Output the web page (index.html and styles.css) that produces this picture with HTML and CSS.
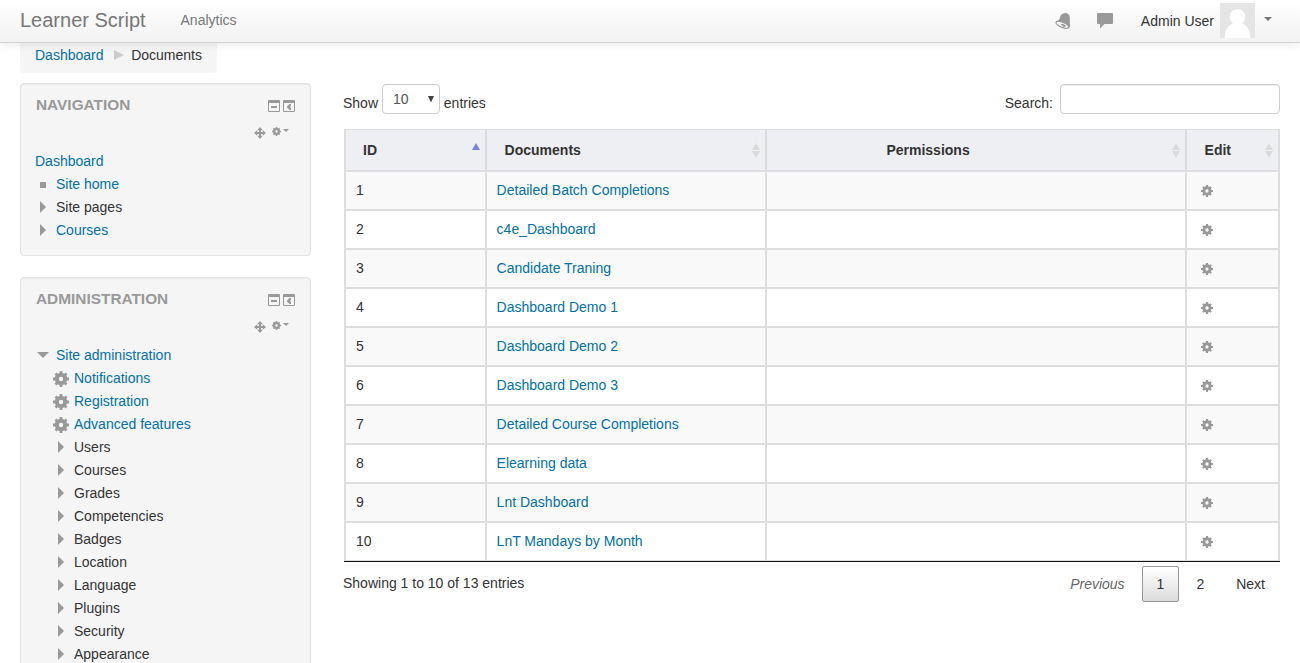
FILE: index.html
```html
<!DOCTYPE html>
<html lang="en">
<head>
<meta charset="utf-8">
<title>Learner Script: Documents</title>
<link rel="stylesheet" href="styles.css">
</head>
<body>
<svg class="defs" width="0" height="0" aria-hidden="true">
  <symbol id="gear" viewBox="0 0 16 16">
    <circle cx="8" cy="8" r="4.200" fill="none" stroke="#999" stroke-width="4"/>
    <path fill="none" stroke="#999" stroke-width="2.800" d="M8 0v4M8 12v4M0 8h4M12 8h4M2.500 2.500l2.500 2.500M11 11l2.500 2.500M2.500 13.500l2.500-2.500M11 5l2.500-2.500"/>
  </symbol>
  <symbol id="hide" viewBox="0 0 12 12">
    <path fill-rule="evenodd" d="M1 0h10a1 1 0 0 1 1 1v10a1 1 0 0 1-1 1H1a1 1 0 0 1-1-1V1a1 1 0 0 1 1-1zM1 3v8h10V3zM3 6h6v2H3z"/>
  </symbol>
  <symbol id="dock" viewBox="0 0 12 12">
    <path fill-rule="evenodd" d="M1 0h10a1 1 0 0 1 1 1v10a1 1 0 0 1-1 1H1a1 1 0 0 1-1-1V1a1 1 0 0 1 1-1zM1 3v8h10V3zM6.500 4H8v1.700L7 7l1 1.300V10H6.500L4 7.500v-1z"/>
  </symbol>
  <symbol id="move" viewBox="0 0 12 12">
    <path d="M6 0l2.800 3.200H7V5h1.800V3.200L12 6 8.800 8.800V7H7v1.800h1.800L6 12 3.200 8.800H5V7H3.200v1.800L0 6l3.200-2.800V5H5V3.200H3.200z"/>
  </symbol>
</svg>

<header class="navbar">
  <a class="brand">Learner Script</a>
  <a class="nav-link">Analytics</a>
  <div class="nav-right">
    <svg class="bell" width="16" height="18" viewBox="0 0 16 18"><path d="M8.500 1.600L11 .8l1.200.7c1.800.8 2.700 2.200 2.600 4.500v5.500l.5 1.500-1.200 3.500L.5 10l2.200-1.300c1.600-.8 2-2 2.500-3.700.5-1.900 1.300-3 3.300-3.400z"/><ellipse cx="7.300" cy="12.800" rx="6.700" ry="2.500" transform="rotate(22 7.300 12.800)" fill="#f7f7f7" stroke="#999" stroke-width="1.100"/><path d="M5.500 12l2-.3 3 1.500.2 1.500-2 .3z"/></svg>
    <svg class="chat" width="16" height="16" viewBox="0 0 16 16"><path d="M1 0h14a1 1 0 0 1 1 1v9a1 1 0 0 1-1 1H7.500L3 15.500V11H1a1 1 0 0 1-1-1V1a1 1 0 0 1 1-1z"/></svg>
    <span class="user">Admin User</span>
    <svg class="avatar" width="35" height="35" viewBox="0 0 35 35"><path fill="#e5e5e5" d="M0 0h35v35H0z"/><path fill="#fff" d="M17.500 6.200a7.700 7.700 0 0 1 4.500 14c5.500 2 8.300 7.500 8.300 14.800H4.700c0-7.300 2.800-12.800 8.300-14.800a7.700 7.700 0 0 1 4.500-14z"/></svg>
    <span class="caret"></span>
  </div>
</header>

<nav class="breadcrumb">
  <a class="link">Dashboard</a><span class="crumb-sep"></span><span>Documents</span>
</nav>

<div class="page">
  <aside class="sidebar">
    <section class="block">
      <div class="block-head"><h2>Navigation</h2><div class="tools"><svg><use href="#hide"/></svg><svg><use href="#dock"/></svg></div></div>
      <div class="controls"><svg class="move"><use href="#move"/></svg><svg class="cog"><use href="#gear"/></svg><span class="caret small"></span></div>
      <ul class="tree">
        <li class="root"><a class="link">Dashboard</a></li>
        <li><i class="icon"><b class="square"></b></i><a class="link">Site home</a></li>
        <li><i class="icon"><b class="right"></b></i>Site pages</li>
        <li><i class="icon"><b class="right"></b></i><a class="link">Courses</a></li>
      </ul>
    </section>
    <section class="block">
      <div class="block-head"><h2>Administration</h2><div class="tools"><svg><use href="#hide"/></svg><svg><use href="#dock"/></svg></div></div>
      <div class="controls"><svg class="move"><use href="#move"/></svg><svg class="cog"><use href="#gear"/></svg><span class="caret small"></span></div>
      <ul class="tree">
        <li><i class="icon"><b class="down"></b></i><a class="link">Site administration</a></li>
        <li class="sub"><i class="icon"><svg class="gear"><use href="#gear"/></svg></i><a class="link">Notifications</a></li>
        <li class="sub"><i class="icon"><svg class="gear"><use href="#gear"/></svg></i><a class="link">Registration</a></li>
        <li class="sub"><i class="icon"><svg class="gear"><use href="#gear"/></svg></i><a class="link">Advanced features</a></li>
        <li class="sub"><i class="icon"><b class="right"></b></i>Users</li>
        <li class="sub"><i class="icon"><b class="right"></b></i>Courses</li>
        <li class="sub"><i class="icon"><b class="right"></b></i>Grades</li>
        <li class="sub"><i class="icon"><b class="right"></b></i>Competencies</li>
        <li class="sub"><i class="icon"><b class="right"></b></i>Badges</li>
        <li class="sub"><i class="icon"><b class="right"></b></i>Location</li>
        <li class="sub"><i class="icon"><b class="right"></b></i>Language</li>
        <li class="sub"><i class="icon"><b class="right"></b></i>Plugins</li>
        <li class="sub"><i class="icon"><b class="right"></b></i>Security</li>
        <li class="sub"><i class="icon"><b class="right"></b></i>Appearance</li>
      </ul>
    </section>
  </aside>

  <main class="content">
    <div class="toolbar">
      <span class="label">Show</span>
      <div class="select">10<svg width="6" height="7" viewBox="0 0 6 7"><path d="M0 0h6L3 6.500z"/></svg></div>
      <span class="label">entries</span>
      <label class="label search-label" for="search">Search:</label>
      <input id="search" class="search" type="text">
    </div>
    <table class="documents">
      <colgroup><col class="c-id"><col class="c-doc"><col class="c-perm"><col class="c-edit"></colgroup>
      <thead>
        <tr>
          <th><div class="th">ID<span class="sort asc"></span></div></th>
          <th><div class="th">Documents<span class="sort"></span></div></th>
          <th><div class="th"><span class="mid">Permissions</span><span class="sort"></span></div></th>
          <th><div class="th">Edit<span class="sort"></span></div></th>
        </tr>
      </thead>
      <tbody>
        <tr><td>1</td><td><a class="link">Detailed Batch Completions</a></td><td></td><td><svg class="edit"><use href="#gear"/></svg></td></tr>
        <tr><td>2</td><td><a class="link">c4e_Dashboard</a></td><td></td><td><svg class="edit"><use href="#gear"/></svg></td></tr>
        <tr><td>3</td><td><a class="link">Candidate Traning</a></td><td></td><td><svg class="edit"><use href="#gear"/></svg></td></tr>
        <tr><td>4</td><td><a class="link">Dashboard Demo 1</a></td><td></td><td><svg class="edit"><use href="#gear"/></svg></td></tr>
        <tr><td>5</td><td><a class="link">Dashboard Demo 2</a></td><td></td><td><svg class="edit"><use href="#gear"/></svg></td></tr>
        <tr><td>6</td><td><a class="link">Dashboard Demo 3</a></td><td></td><td><svg class="edit"><use href="#gear"/></svg></td></tr>
        <tr><td>7</td><td><a class="link">Detailed Course Completions</a></td><td></td><td><svg class="edit"><use href="#gear"/></svg></td></tr>
        <tr><td>8</td><td><a class="link">Elearning data</a></td><td></td><td><svg class="edit"><use href="#gear"/></svg></td></tr>
        <tr><td>9</td><td><a class="link">Lnt Dashboard</a></td><td></td><td><svg class="edit"><use href="#gear"/></svg></td></tr>
        <tr><td>10</td><td><a class="link">LnT Mandays by Month</a></td><td></td><td><svg class="edit"><use href="#gear"/></svg></td></tr>
      </tbody>
    </table>
    <div class="footer">
      <span class="info">Showing 1 to 10 of 13 entries</span>
      <div class="pager">
        <a class="page-btn disabled">Previous</a><a class="page-btn current">1</a><a class="page-btn">2</a><a class="page-btn">Next</a>
      </div>
    </div>
  </main>
</div>
</body>
</html>
```
FILE: styles.css
```css
* { box-sizing: border-box; }
body {
  margin: 0;
  background: #fff;
  color: #333;
  font: 14px/20px "Liberation Sans", Arial, sans-serif;
}
svg { display: block; fill: #999; flex: none; }
.defs { position: absolute; }
.link { color: #0070a8; }

.navbar {
  position: relative;
  z-index: 2;
  display: flex;
  align-items: center;
  height: 43px;
  padding: 0 28px 2px 20px;
  border-bottom: 1px solid #d4d4d4;
  background: linear-gradient(#fff, #f2f2f2);
  box-shadow: 0 1px 10px rgba(0, 0, 0, .1);
  color: #777;
}
.brand { font-size: 20px; }
.nav-link { margin-left: 34.900px; }
.nav-right { display: flex; align-items: center; margin-left: auto; color: #333; }
.bell { margin-top: 1px; }
.chat { margin: 1px 28px 0 26px; }
.user { margin-top: 1px; }
.avatar { margin: 0 9px 0 6px; }
.caret {
  margin-top: -2px;
  border: 4px solid transparent;
  border-top-color: #777;
  border-bottom: 0;
}

.breadcrumb {
  display: flex;
  align-items: center;
  width: 197px;
  height: 30px;
  margin-left: 20px;
  padding: 0 15px 6px;
  border-radius: 0 0 4px 4px;
  background: #f5f5f5;
}
.crumb-sep {
  margin: 0 7px 0 10.700px;
  border: 5px solid transparent;
  border-left: 10px solid #ccc;
  border-right: 0;
}

.page {
  display: flex;
  align-items: flex-start;
  height: 590px;
  padding: 10px 20px 0;
  overflow: hidden;
}
.sidebar { width: 291px; flex: none; }
.block {
  margin-bottom: 21px;
  padding: 11px 14px 14px;
  border: 1px solid #e3e3e3;
  border-radius: 4px;
  background: #f5f5f5;
  box-shadow: inset 0 1px 1px rgba(0, 0, 0, .05);
}
.block-head { display: flex; justify-content: space-between; height: 20px; padding-left: 1px; }
.block h2 {
  margin: 0;
  color: #999;
  font-size: 15.400px;
  line-height: 20px;
  text-transform: uppercase;
}
.tools { display: flex; gap: 3px; padding: 5px 1px 0 0; }
.tools svg { width: 12px; height: 12px; }
.controls { display: flex; height: 34px; padding: 12px 7px 0 0; justify-content: flex-end; }
.move { width: 12px; height: 12px; margin-right: 6px; }
.cog { width: 9px; height: 9px; margin: -.5px 2.500px 0 0; }
.caret.small { height: 0; margin-top: 2px; border-width: 3px 3px 0; border-top-color: #999; }
.tree { margin: 0; padding: 0; list-style: none; }
.tree li { display: flex; align-items: center; height: 23px; }
.tree .sub { padding-left: 18px; }
.icon { display: flex; justify-content: center; width: 16px; margin-right: 5px; }
.square { width: 6px; height: 6px; margin-top: 2px; background: #999; }
.right { border: 6px solid transparent; border-left-color: #999; border-right: 0; }
.down { border: 6px solid transparent; border-top-color: #999; border-bottom: 0; }
.gear { width: 16px; height: 16px; margin: 2px 0 0; }

.content { width: 937px; margin-left: 32px; }
.toolbar { display: flex; height: 46px; padding-top: 1px; }
.label { margin-top: 9px; }
.select {
  display: flex;
  justify-content: space-between;
  width: 58px;
  height: 30px;
  margin: 0 3.800px 0 4px;
  padding: 4px 5px 4px 10px;
  border: 1px solid #ccc;
  border-radius: 4px;
  color: #555;
}
.select svg { margin-top: 7px; fill: #444; }
.search-label { margin-left: auto; }
.search {
  width: 220px;
  height: 30px;
  margin-left: 7px;
  border: 1px solid #ccc;
  border-radius: 4px;
  box-shadow: inset 0 1px 1px rgba(0, 0, 0, .075);
}

.documents {
  width: 936px;
  margin-left: 1px;
  table-layout: fixed;
  border-collapse: separate;
  border-spacing: 0;
  border-bottom: 1px solid #111;
}
.c-id { width: 143px; }
.c-doc { width: 280px; }
.c-perm { width: 420px; }
.c-edit { width: 93px; }
.documents th, .documents td {
  padding: 0 9.600px;
  border-right: 2px solid #ddd;
  border-bottom: 2px solid #ddd;
  text-align: left;
}
.documents th:first-child, .documents td:first-child { border-left: 2px solid #ddd; }
.documents th { height: 43px; padding: 0 4.500px 0 17.600px; border-top: 1px solid #ddd; background: #eeeff2; }
.documents th:first-child { padding-left: 17px; }
.documents td { height: 39px; padding-bottom: 2px; }
.documents td:first-child { padding-left: 10px; }
.documents tbody tr:nth-child(odd) td { background: #f9f9f9; }
.documents tbody tr:last-child td { height: 38px; border-bottom-width: 1px; }
.documents td:last-child { padding-left: 14px; }
.th { display: flex; align-items: center; justify-content: space-between; }
.mid { flex: 1; text-align: center; padding-right: 100px; }
.sort { display: flex; flex-direction: column; gap: 1px; margin: 1px 1px 0 0; }
.sort::before, .sort::after { content: ""; border: 4.500px solid transparent; }
.sort::before { border-bottom: 7px solid #dadada; border-top: 0; }
.sort::after { border-top: 7px solid #dadada; border-bottom: 0; }
.sort.asc { margin-top: 0; }
.sort.asc::before { border-bottom-color: #7584d9; }
.sort.asc::after { border-top-color: transparent; }
.edit { width: 12px; height: 12px; margin-top: 2px; }

.footer { display: flex; justify-content: space-between; }
.info { margin-top: 11px; }
.pager { display: flex; gap: 2px; padding-top: 4px; }
.page-btn {
  height: 36px;
  padding: 7px 14px;
  border: 1px solid transparent;
  border-radius: 2px;
}
.page-btn.disabled { color: #666; font-style: italic; }
.page-btn.current { border-color: #979797; background: linear-gradient(#fff, #dcdcdc); }
```
